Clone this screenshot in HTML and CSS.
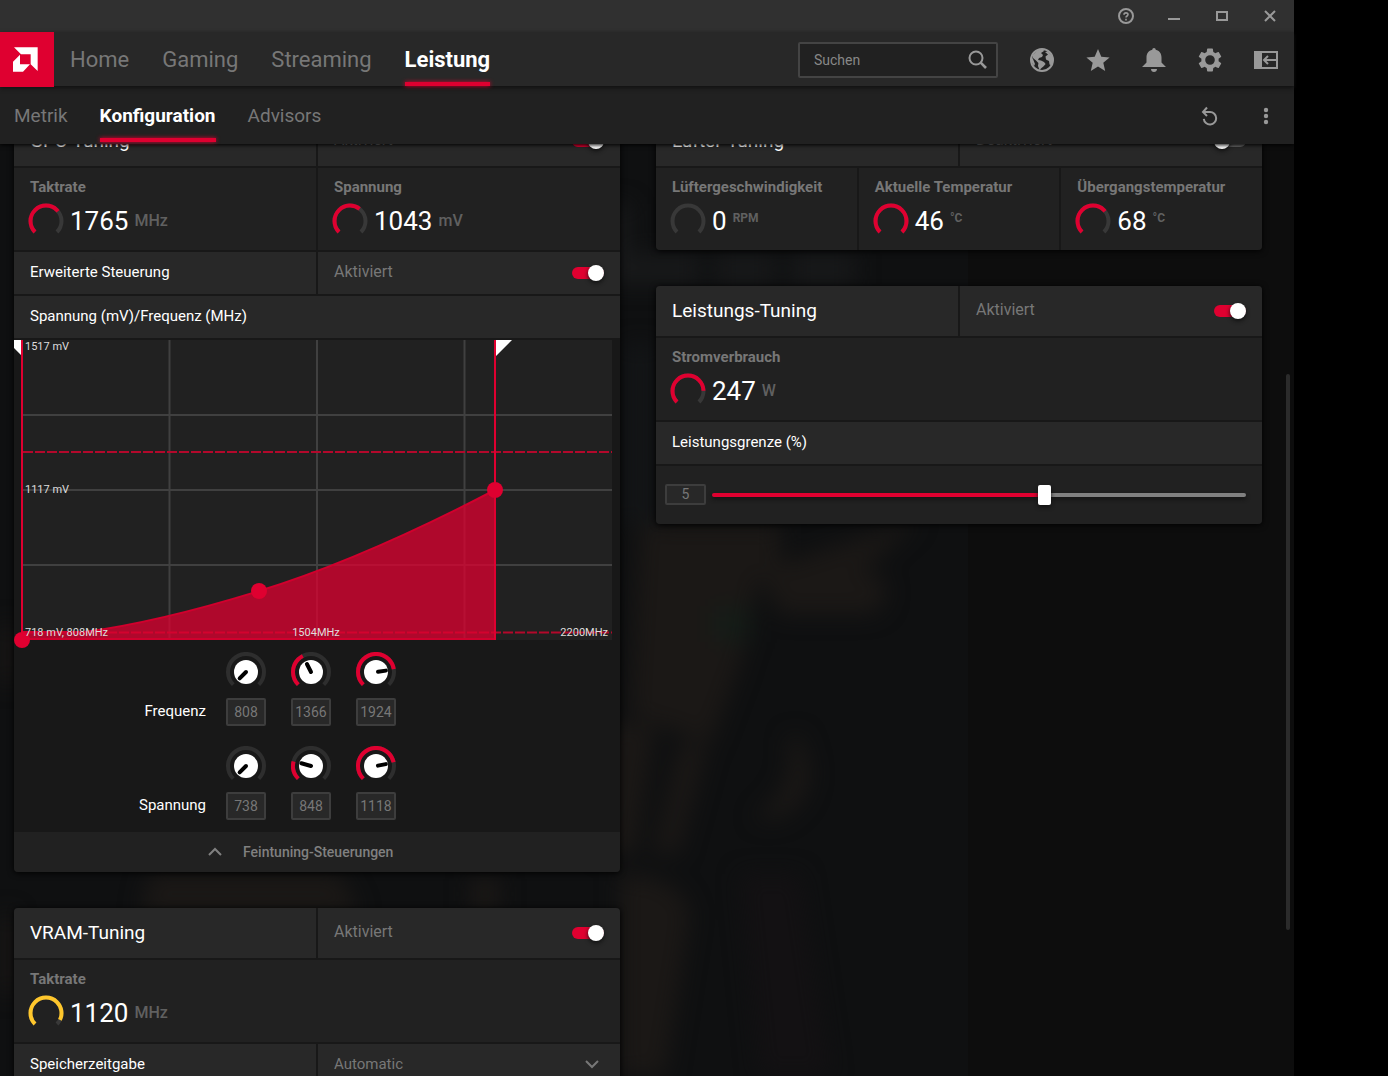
FILE: index.html
```html
<!DOCTYPE html>
<html lang="de">
<head>
<meta charset="utf-8">
<title>Leistung – Konfiguration</title>
<link rel="stylesheet" href="styles.css">
</head>
<body>
<svg class="defs" aria-hidden="true">
  <symbol id="arc" viewBox="0 0 36 36"><path d="M7 29A15.5 15.5 0 1 1 29 29" pathLength="100"/></symbol>
</svg>
<div class="app">
  <div class="titlebar">
    <button class="icon-btn small" aria-label="Hilfe"><svg viewBox="0 0 16 16" fill="none" stroke="currentColor" stroke-width="2"><circle cx="8" cy="8" r="7"/><path d="M6 6.8C6 4.2 10 4.4 10 6.6 10 8 8 8 8 9.6M8 10.8v1.6" stroke-width="1.6"/></svg></button>
    <button class="icon-btn small" aria-label="Minimieren"><svg viewBox="0 0 16 16" fill="currentColor"><path d="M2 10h12v2H2z"/></svg></button>
    <button class="icon-btn small" aria-label="Maximieren"><svg viewBox="0 0 16 16" fill="none" stroke="currentColor" stroke-width="2"><path d="M3 4h10v8H3z"/></svg></button>
    <button class="icon-btn small" aria-label="Schließen"><svg viewBox="0 0 16 16" fill="none" stroke="currentColor" stroke-width="2"><path d="M3 3l10 10M13 3L3 13"/></svg></button>
  </div>

  <header class="topbar">
    <a class="logo" href="#" aria-label="AMD"><svg viewBox="0 0 162 162" fill="#fff"><path d="M42 46H113V117L92 97V67H63zM39 89L60 68V97H90L69 119H39z"/></svg></a>
    <nav class="main-nav">
      <a href="#">Home</a>
      <a href="#">Gaming</a>
      <a href="#">Streaming</a>
      <a href="#" class="active">Leistung</a>
    </nav>
    <div class="tools">
      <label class="search">
        <input type="text" placeholder="Suchen" aria-label="Suchen">
        <svg viewBox="0 0 20 20" fill="none" stroke="currentColor" stroke-width="2"><circle cx="8" cy="8" r="6.5"/><path d="M12.7 12.7L18 18" stroke-width="2.6"/></svg>
      </label>
      <button class="icon-btn" aria-label="Web"><svg viewBox="0 0 24 24"><circle cx="12" cy="12" r="11" fill="#222" stroke="currentColor" stroke-width="2"/><path fill="currentColor" d="M3 7L7 2.5 13 1l1 2-3 2 2 2-1 2-3 1-1 2 3 .6 3 1.4 1.6 2-2.2 2.6L11.500 20 9.500 22 8 18l.4-3L6 12.500 3 10zM15 4l3-.5 4.500 5 .8 4-1.300 5-2.500-1-.5-3.500-3-1.500-.5-3 2.500-2zM1 9l2 2 2 5-1 2-3-5z"/></svg></button>
      <button class="icon-btn" aria-label="Favoriten"><svg viewBox="0 0 24 24" fill="currentColor"><path d="M12 1l3.300 7.700 8.300.7-6.300 5.400L19.200 23 12 18.600 4.800 23l1.900-8.200L.4 9.400l8.300-.7z"/></svg></button>
      <button class="icon-btn" aria-label="Benachrichtigungen"><svg viewBox="0 0 24 24" fill="currentColor"><path d="M12 0c1 0 1.700.8 1.700 1.800C17.500 2.600 19.500 5.500 19.500 9.500v5L24 19H0l4.500-4.500v-5c0-4 2-6.900 5.800-7.700C10.300.8 11 0 12 0zM9 21h6c0 1.800-1.300 3-3 3s-3-1.200-3-3z"/></svg></button>
      <button class="icon-btn" aria-label="Einstellungen"><svg viewBox="2 2 20 20" fill="currentColor"><path d="M19.140 12.940c.04-.3.060-.61.060-.94 0-.32-.02-.64-.07-.94l2.030-1.580c.18-.14.230-.41.120-.61l-1.920-3.320c-.12-.22-.37-.29-.59-.22l-2.390.96c-.5-.38-1.030-.7-1.620-.94L14.400 2.810c-.04-.24-.24-.41-.48-.41h-3.840c-.24 0-.43.17-.47.41L9.250 5.350c-.59.24-1.130.57-1.620.94l-2.390-.96c-.22-.08-.47 0-.59.22L2.740 8.870c-.12.210-.08.470.120.610l2.030 1.580c-.05.3-.09.630-.09.940s.020.640.070.940l-2.030 1.580c-.18.140-.23.410-.12.610l1.920 3.320c.120.220.370.290.590.220l2.390-.96c.5.380 1.030.7 1.620.940l.36 2.540c.050.240.240.410.480.410h3.840c.240 0 .440-.17.470-.41l.36-2.540c.590-.24 1.130-.56 1.620-.94l2.390.96c.220.080.470 0 .590-.22l1.920-3.320c.120-.22.070-.47-.12-.61zM12 16a4 4 0 1 1 0-8 4 4 0 0 1 0 8z"/></svg></button>
      <button class="icon-btn" aria-label="Andocken"><svg viewBox="0 0 24 24" fill="none" stroke="currentColor" stroke-width="2"><path d="M1 4h22v16H1z"/><path d="M1 4h7v16H1z" fill="currentColor" stroke="none"/><path d="M22 12H10M14 8l-4 4 4 4"/></svg></button>
    </div>
  </header>

  <div class="subbar">
    <nav class="sub-nav">
      <a href="#">Metrik</a>
      <a href="#" class="active">Konfiguration</a>
      <a href="#">Advisors</a>
    </nav>
    <div class="sub-tools">
      <button class="icon-btn" aria-label="Zurücksetzen"><svg viewBox="0 0 24 24" fill="none" stroke="currentColor" stroke-width="2"><path d="M5.500 8H12a6.200 6.200 0 1 1-6.200 6.800M9 3.500L5 8l4 4"/></svg></button>
      <button class="icon-btn" aria-label="Mehr"><svg viewBox="0 0 24 24" fill="currentColor"><circle cx="12" cy="6" r="2.200"/><circle cx="12" cy="12" r="2.200"/><circle cx="12" cy="18" r="2.200"/></svg></button>
    </div>
  </div>

  <main class="stage">
    <svg class="backdrop" viewBox="0 0 1294 932" preserveAspectRatio="xMinYMin slice" aria-hidden="true">
      <rect width="968" height="932" fill="#0f1011"/>
      <g class="haze" fill="#1b1816">
        <path d="M600 60h30v50h-30zM610 110h90v30h-90zM715 110h60v30h-60zM790 110h65v30h-65z" fill="#18191a"/>
        <path d="M625 200h30v180h-30z" fill="#131517"/>
        <path d="M640 380h140v40l140-45-60 55h20q15 30-10 40h-90l-20-40-20 90-30 80-80-30z"/>
        <path d="M605 580h50l-20 130h-35zM680 600h28l-30 110h-25zM620 730q60 0 70 40l-25 162h-45z"/>
        <path d="M798 590q30 60-20 85h-25q45-30 35-80z"/>
        <path d="M150 730h190l20 40H140zM470 735h30v30h-30zM0 480h14v60H0zM0 770h14v80H0z"/>
        <path d="M740 730h60l30 202h-70z" fill="#131113"/>
        <path d="M712 462h38v36h-38z" fill="#151c17"/>
      </g>
    </svg>
    <div class="board">
      <div class="column">
        <section class="card">
          <div class="row two head">
            <h2 class="cell">GPU-Tuning</h2>
            <label class="cell switch">Aktiviert<input type="checkbox" checked></label>
          </div>
          <div class="row two">
            <div class="cell stat"><span class="label">Taktrate</span>
              <div class="value"><svg class="gauge"><use href="#arc"/><use href="#arc" class="on" stroke-dasharray="69 200"/></svg><b>1765</b><i>MHz</i></div></div>
            <div class="cell stat"><span class="label">Spannung</span>
              <div class="value"><svg class="gauge"><use href="#arc"/><use href="#arc" class="on" stroke-dasharray="64 200"/></svg><b>1043</b><i>mV</i></div></div>
          </div>
          <div class="row two bar">
            <h3 class="cell">Erweiterte Steuerung</h3>
            <label class="cell switch">Aktiviert<input type="checkbox" checked></label>
          </div>
          <div class="row bar"><h3 class="cell">Spannung (mV)/Frequenz (MHz)</h3></div>
          <svg class="chart" viewBox="0 0 606 308" role="img" aria-label="Spannungs-Frequenz-Kurve">
            <rect x="8" width="590" height="300" fill="#212121"/>
            <path d="M155.500 0V300M303 0V300M450.500 0V300M8 75H598M8 150H598M8 225H598" stroke="#404040" stroke-width="2"/>
            <path d="M9 112H598M9 292.500H598" stroke="#b3082b" stroke-width="2" stroke-dasharray="10 2"/>
            <path d="M8 292H70C130 284 190 268 245 251C330 225 410 187 481 150V300H8z" fill="#df0030" fill-opacity=".75"/>
            <path d="M8 292H70C130 284 190 268 245 251C330 225 410 187 481 150M8 299H481" fill="none" stroke="#d0002d" stroke-width="2"/>
            <path d="M0 0H7V15L0 8zM482 0H498L482 16z" fill="#fff"/>
            <path d="M8 0V300M481 0V300" stroke="#df0030" stroke-width="2"/>
            <g fill="#df0030"><circle cx="8" cy="300" r="8"/><circle cx="245" cy="251" r="8"/><circle cx="481" cy="150" r="8"/></g>
            <g class="ticks"><text x="11" y="10">1517 mV</text><text x="11" y="153">1117 mV</text><text x="11" y="296">718 mV, 808MHz</text><text x="302" y="296" text-anchor="middle">1504MHz</text><text x="594" y="296" text-anchor="end">2200MHz</text></g>
          </svg>
          <div class="knobs">
            <svg class="knob k1" viewBox="0 0 40 40"><path d="M7.300 32.700A18 18 0 1 1 32.700 32.700"/><circle cx="20" cy="20" r="12"/><path class="hand" d="M20 20H29" transform="rotate(135 20 20)"/></svg>
            <svg class="knob" viewBox="0 0 40 40"><path d="M7.300 32.700A18 18 0 1 1 32.700 32.700"/><path class="on" pathLength="100" stroke-dasharray="40 200" d="M7.300 32.700A18 18 0 1 1 32.700 32.700"/><circle cx="20" cy="20" r="12"/><path class="hand" d="M20 20H29" transform="rotate(243 20 20)"/></svg>
            <svg class="knob" viewBox="0 0 40 40"><path d="M7.300 32.700A18 18 0 1 1 32.700 32.700"/><path class="on" pathLength="100" stroke-dasharray="80 200" d="M7.300 32.700A18 18 0 1 1 32.700 32.700"/><circle cx="20" cy="20" r="12"/><path class="hand" d="M22 20H30" transform="rotate(352 20 20)"/></svg>
            <span class="knob-label" id="freq">Frequenz</span>
            <input type="text" value="808" aria-labelledby="freq"><input type="text" value="1366" aria-labelledby="freq"><input type="text" value="1924" aria-labelledby="freq">
          </div>
          <div class="knobs">
            <svg class="knob k1" viewBox="0 0 40 40"><path d="M7.300 32.700A18 18 0 1 1 32.700 32.700"/><circle cx="20" cy="20" r="12"/><path class="hand" d="M20 20H29" transform="rotate(135 20 20)"/></svg>
            <svg class="knob" viewBox="0 0 40 40"><path d="M7.300 32.700A18 18 0 1 1 32.700 32.700"/><path class="on" pathLength="100" stroke-dasharray="22 200" d="M7.300 32.700A18 18 0 1 1 32.700 32.700"/><circle cx="20" cy="20" r="12"/><path class="hand" d="M20 20H30" transform="rotate(196 20 20)"/></svg>
            <svg class="knob" viewBox="0 0 40 40"><path d="M7.300 32.700A18 18 0 1 1 32.700 32.700"/><path class="on" pathLength="100" stroke-dasharray="79 200" d="M7.300 32.700A18 18 0 1 1 32.700 32.700"/><circle cx="20" cy="20" r="12"/><path class="hand" d="M22 20H30" transform="rotate(349 20 20)"/></svg>
            <span class="knob-label" id="volt">Spannung</span>
            <input type="text" value="738" aria-labelledby="volt"><input type="text" value="848" aria-labelledby="volt"><input type="text" value="1118" aria-labelledby="volt">
          </div>
          <button class="expander"><svg viewBox="0 0 14 14" fill="none" stroke="currentColor" stroke-width="2"><path d="M1 10l6-6 6 6"/></svg>Feintuning-Steuerungen</button>
        </section>

        <section class="card">
          <div class="row two head">
            <h2 class="cell">VRAM-Tuning</h2>
            <label class="cell switch">Aktiviert<input type="checkbox" checked></label>
          </div>
          <div class="row">
            <div class="cell stat"><span class="label">Taktrate</span>
              <div class="value"><svg class="gauge"><use href="#arc"/><use href="#arc" class="on warm" stroke-dasharray="93 200"/></svg><b>1120</b><i>MHz</i></div></div>
          </div>
          <div class="row two bar">
            <h3 class="cell" id="timing">Speicherzeitgabe</h3>
            <div class="cell picker">
              <select aria-labelledby="timing"><option>Automatic</option></select>
              <svg viewBox="0 0 14 14" fill="none" stroke="currentColor" stroke-width="2"><path d="M1 4l6 6 6-6"/></svg>
            </div>
          </div>
        </section>
      </div>

      <div class="column">
        <section class="card">
          <div class="row two head">
            <h2 class="cell">Lüfter-Tuning</h2>
            <label class="cell switch">Deaktiviert<input type="checkbox"></label>
          </div>
          <div class="row three">
            <div class="cell stat"><span class="label">Lüftergeschwindigkeit</span>
              <div class="value"><svg class="gauge"><use href="#arc"/></svg><b>0</b><i class="sup">RPM</i></div></div>
            <div class="cell stat"><span class="label">Aktuelle Temperatur</span>
              <div class="value"><svg class="gauge"><use href="#arc"/><use href="#arc" class="on"/></svg><b>46</b><i class="sup">°C</i></div></div>
            <div class="cell stat"><span class="label">Übergangstemperatur</span>
              <div class="value"><svg class="gauge"><use href="#arc"/><use href="#arc" class="on" stroke-dasharray="69 200"/></svg><b>68</b><i class="sup">°C</i></div></div>
          </div>
        </section>

        <section class="card">
          <div class="row two head">
            <h2 class="cell">Leistungs-Tuning</h2>
            <label class="cell switch">Aktiviert<input type="checkbox" checked></label>
          </div>
          <div class="row">
            <div class="cell stat"><span class="label">Stromverbrauch</span>
              <div class="value"><svg class="gauge"><use href="#arc"/><use href="#arc" class="on" stroke-dasharray="83 200"/></svg><b>247</b><i>W</i></div></div>
          </div>
          <div class="row bar"><h3 class="cell" id="limit">Leistungsgrenze (%)</h3></div>
          <div class="row">
            <div class="cell slider">
              <input type="text" value="5" aria-labelledby="limit">
              <input type="range" min="-50" max="38" value="5" aria-labelledby="limit">
            </div>
          </div>
        </section>
      </div>
    </div>
    <div class="scroll-thumb"></div>
  </main>
</div>
</body>
</html>
```
FILE: styles.css
```css
* { box-sizing: border-box; }

:root {
  --red: #df0030;
  --dim: #777;
  --head: #282828;
  --body: #212121;
}

body {
  margin: 0;
  background: #000;
  color: #fff;
  font: 15px/22px Roboto, "Open Sans", sans-serif;
}

a { color: inherit; text-decoration: none; }
button, input, select { font: inherit; color: inherit; }
h2, h3 { margin: 0; font-weight: 400; }
.defs { position: absolute; width: 0; height: 0; }

.app {
  display: flex;
  flex-direction: column;
  height: 100vh;
  margin-right: 94px;
  background: #0d0d0d;
}

/* Window and navigation bars */
.titlebar {
  display: flex;
  justify-content: flex-end;
  align-items: center;
  gap: 32px;
  height: 32px;
  padding-right: 16px;
  background: #303030;
}

.icon-btn {
  display: block;
  width: 24px;
  height: 24px;
  padding: 0;
  border: 0;
  background: none;
  color: #999;
}
.icon-btn.small { width: 16px; height: 16px; }
.icon-btn svg { display: block; width: 100%; height: 100%; }

.topbar {
  position: relative;
  z-index: 3;
  display: flex;
  height: 54px;
  background: var(--head);
  box-shadow: 0 2px 4px #111;
}
.logo { width: 54px; height: 55px; background: var(--red); }
.logo svg { display: block; width: 54px; height: 54px; }

.main-nav, .sub-nav { display: flex; color: var(--dim); }
.main-nav { gap: 33px; margin-left: 16px; padding-top: 2px; font-size: 22px; }
.sub-nav { gap: 32px; padding-top: 4px; font-size: 19px; }
.main-nav a, .sub-nav a {
  display: flex;
  align-items: center;
}
.main-nav .active, .sub-nav .active {
  position: relative;
  color: #fff;
  font-weight: 700;
}
.main-nav .active::after, .sub-nav .active::after {
  content: "";
  position: absolute;
  left: 0;
  right: 0;
  bottom: 0;
  height: 4px;
  background: var(--red);
  box-shadow: 0 0 4px var(--red);
}

.tools, .sub-tools {
  display: flex;
  align-items: center;
  gap: 32px;
  margin-left: auto;
  padding: 2px 16px 0 0;
}
.sub-tools { padding-top: 4px; }
.search {
  display: flex;
  align-items: center;
  width: 200px;
  height: 36px;
  padding: 0 8px 0 14px;
  border: 2px solid #444;
  border-radius: 2px;
  background: var(--body);
  color: #999;
}
.search input {
  flex: 1;
  min-width: 0;
  padding: 0;
  border: 0;
  outline: 0;
  background: none;
  font-size: 14px;
}
.search input::placeholder { color: #888; opacity: 1; }
.search svg { width: 20px; height: 20px; }

.subbar {
  position: relative;
  z-index: 2;
  display: flex;
  height: 58px;
  padding: 0 0 2px 14px;
  background: var(--body);
  box-shadow: 0 1px 4px #000;
}

/* Scrolling stage */
.stage {
  position: relative;
  flex: 1;
  min-height: 0;
  overflow: hidden;
}
.backdrop { position: absolute; inset: 0; width: 100%; height: 100%; }
.haze { filter: blur(11px); }
.scroll-thumb {
  position: absolute;
  right: 4px;
  top: 24.7%;
  width: 4px;
  height: 59.6%;
  border-radius: 2px;
  background: #2b2b2b;
}

.board {
  position: relative;
  display: grid;
  grid-template-columns: 1fr 1fr;
  gap: 36px;
  margin-top: -28px;
  padding: 0 32px 0 14px;
}
.column { display: flex; flex-direction: column; gap: 36px; min-width: 0; }

/* Cards */
.card {
  display: flex;
  flex-direction: column;
  gap: 2px;
  overflow: hidden;
  border-radius: 4px;
  background: #181818;
  box-shadow: 0 1px 6px #000;
}
.row { display: grid; gap: 2px; }
.two { grid-template-columns: 1fr 1fr; }
.three { grid-template-columns: 1fr 1fr 1fr; }
.cell {
  display: flex;
  align-items: center;
  min-width: 0;
  padding: 0 16px 2px;
  background: var(--body);
}
.head .cell { height: 50px; background: var(--head); }
.bar .cell { height: 42px; background: var(--head); }
.head h2.cell { padding-bottom: 0; font-size: 19px; }
h3 { font-size: 15px; }

.cell.stat {
  flex-direction: column;
  align-items: flex-start;
  gap: 5px;
  padding: 8px 0 11px 16px;
}
.label { color: var(--dim); font-weight: 700; white-space: nowrap; }
.value { display: flex; align-items: center; gap: 6px; height: 36px; }
.value b { font-size: 26px; font-weight: 400; }
.value i { color: #606060; font-size: 16px; font-style: normal; font-weight: 500; }
.value .sup { font-size: 12px; font-weight: 700; padding-bottom: 6px; }

.gauge { width: 36px; height: 36px; margin-left: -2px; fill: none; stroke: #383838; stroke-width: 4px; }
.gauge .on { stroke: var(--red); }
.gauge .warm { stroke: #ffc72c; }

.switch { justify-content: space-between; color: var(--dim); font-size: 16px; }
.switch input {
  appearance: none;
  position: relative;
  width: 32px;
  height: 16px;
  margin: 2px 0 0;
}
.switch input::before {
  content: "";
  position: absolute;
  inset: 2px 0;
  border-radius: 6px;
  background: #666;
}
.switch input::after {
  content: "";
  position: absolute;
  left: 0;
  width: 16px;
  height: 16px;
  border-radius: 50%;
  background: #fff;
  box-shadow: 0 2px 4px #111;
}
.switch input:checked::before { background: var(--red); }
.switch input:checked::after { left: 16px; }

/* Voltage curve */
.chart { display: block; width: 100%; }
.ticks { fill: #ddd; font-size: 11px; }

.knobs {
  display: grid;
  grid-template-columns: 187px 40px 40px 40px;
  grid-template-rows: 40px 28px;
  column-gap: 25px;
  row-gap: 6px;
  padding: 2px 0 10px;
}
.knobs + .knobs { padding-top: 8px; }
.knob { width: 40px; height: 40px; fill: none; stroke: #2e2e2e; stroke-width: 4px; }
.knob circle { fill: #fff; stroke: none; }
.knob .on { stroke: var(--red); }
.knob .hand { stroke: #000; stroke-linecap: round; }
.k1 { grid-column: 2; }
.knob-label { align-self: center; margin-right: -5px; padding-bottom: 3px; text-align: right; }
.knobs input, .slider input[type="text"] {
  min-width: 0;
  padding: 0;
  border: 2px solid #3d3d3d;
  border-radius: 2px;
  background: #282828;
  color: var(--dim);
  font-size: 14px;
  text-align: center;
}

.expander {
  display: flex;
  align-items: center;
  gap: 21px;
  height: 40px;
  padding: 0 0 0 194px;
  border: 0;
  background: var(--body);
  color: #808080;
  font-size: 14px;
  font-weight: 500;
}
.expander svg { width: 14px; height: 14px; }

.picker { justify-content: space-between; color: var(--dim); }
.picker select {
  flex: 1;
  appearance: none;
  margin-right: -14px;
  padding: 0;
  border: 0;
  background: none;
}
.picker svg { width: 14px; height: 14px; margin-right: 5px; pointer-events: none; }

/* Power limit slider */
.slider { gap: 6px; height: 58px; padding: 0 16px 2px 9px; }
.slider input[type="text"] { width: 41px; height: 21px; line-height: 17px; }
.slider input[type="range"] {
  appearance: none;
  flex: 1;
  min-width: 0;
  height: 20px;
  margin: 2px 0 0;
  background: none;
}
.slider input[type="range"]::-webkit-slider-runnable-track {
  height: 4px;
  border-radius: 2px;
  background: linear-gradient(90deg, var(--red) 62%, #808080 62%);
  box-shadow: 0 2px 4px #111;
}
.slider input[type="range"]::-webkit-slider-thumb {
  appearance: none;
  width: 13px;
  height: 20px;
  margin-top: -8px;
  border-radius: 2px;
  background: #fff;
  box-shadow: 0 2px 4px #111;
}
```
